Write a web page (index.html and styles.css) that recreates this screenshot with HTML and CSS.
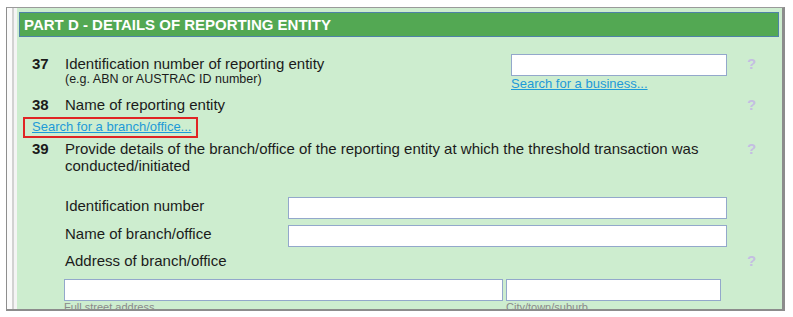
FILE: index.html
```html
<!DOCTYPE html>
<html>
<head>
<meta charset="utf-8">
<link rel="stylesheet" href="styles.css">
</head>
<body>
<div class="frame">
  <div class="strip"></div>
  <div class="panel">
    <div class="header">PART D - DETAILS OF REPORTING ENTITY</div>

    <div class="row r37">
      <div class="num">37</div>
      <div class="label">Identification number of reporting entity<div class="sub">(e.g. ABN or AUSTRAC ID number)</div></div>
      <div class="field">
        <div class="input"></div>
        <a class="link" href="#">Search for a business...</a>
      </div>
      <div class="help">?</div>
    </div>

    <div class="row r38">
      <div class="num">38</div>
      <div class="label">Name of reporting entity</div>
      <div class="help">?</div>
    </div>

    <div class="branch"><a class="link" href="#">Search for a branch/office...</a></div>

    <div class="row r39">
      <div class="num">39</div>
      <div class="label">Provide details of the branch/office of the reporting entity at which the threshold transaction was conducted/initiated</div>
      <div class="help">?</div>
    </div>

    <div class="subrow s-id">
      <div class="slabel">Identification number</div>
      <div class="input wide"></div>
      <div class="help"></div>
    </div>
    <div class="subrow s-name">
      <div class="slabel">Name of branch/office</div>
      <div class="input wide"></div>
      <div class="help"></div>
    </div>
    <div class="subrow s-addr">
      <div class="slabel grow">Address of branch/office</div>
      <div class="help">?</div>
    </div>
    <div class="addr">
      <div class="acol street">
        <div class="input"></div>
        <div class="hint">Full street address</div>
      </div>
      <div class="acol city">
        <div class="input"></div>
        <div class="hint">City/town/suburb</div>
      </div>
    </div>
  </div>
</div>
</body>
</html>
```
FILE: styles.css
```css
html, body {
  margin: 0;
  padding: 0;
  background: #ffffff;
}
body {
  font-family: "Liberation Sans", Arial, sans-serif;
  color: #1b1b1b;
}
.frame {
  margin: 7px 0 0 6px;
  width: 775px;
  height: 301px;
  border-top: 1px solid #9a9a9a;
  border-left: 1px solid #8e8e8e;
  border-right: 3px solid #8c8c8c;
  border-bottom: 2px solid #8c8c8c;
  display: flex;
  overflow: hidden;
}
.strip {
  width: 10px;
  flex: none;
  background: linear-gradient(to right, #fbfbfb 0, #fbfbfb 5px, #d2d2d2 5px, #d2d2d2 7px, #f4f4f4 7px);
}
.panel {
  flex: 1;
  background: #cdedcf;
  padding-left: 15px;
  overflow: hidden;
}
.header {
  margin: 4px 3px 0 -13px;
  height: 17px;
  padding: 3px 4px;
  border: 1px solid #4f82a8;
  background: #53a853;
  color: #ffffff;
  font-weight: bold;
  font-size: 15px;
  line-height: 17px;
}
.row {
  display: flex;
  align-items: flex-start;
  font-size: 15px;
  line-height: 17px;
}
.num {
  width: 33px;
  flex: none;
  font-weight: bold;
}
.label {
  flex: 1;
}
.sub {
  font-size: 12.5px;
  line-height: 14px;
}
.field {
  width: 216px;
  flex: none;
  display: flex;
  flex-direction: column;
}
.help {
  width: 55px;
  flex: none;
  padding-left: 20px;
  box-sizing: border-box;
  color: #c4bee2;
  font-weight: bold;
  font-size: 15px;
  line-height: 17px;
}
.input {
  height: 20px;
  background: #ffffff;
  border: 1px solid #93a8cb;
}
.link {
  color: #1d9ad8;
  font-size: 13px;
  line-height: 15px;
  text-decoration: underline;
}
.r37 {
  margin-top: 17px;
}
.r37 .num, .r37 .label, .r37 .help {
  padding-top: 1px;
}
.r38 {
  margin-top: 5px;
}
.branch {
  margin: 4px 0 0 -9px;
  display: inline-block;
  border: 2px solid #e02424;
  padding: 0 5px 2px 7px;
  line-height: 15px;
}
.branch .link {
  display: block;
}
.r39 {
  margin-top: 2px;
}
.subrow {
  display: flex;
  align-items: flex-start;
  padding-left: 33px;
  font-size: 15px;
  line-height: 17px;
}
.slabel {
  width: 223px;
  flex: none;
}
.slabel.grow {
  flex: 1;
  width: auto;
}
.input.wide {
  width: 437px;
  flex: none;
}
.s-id {
  margin-top: 23px;
}
.s-name {
  margin-top: 6px;
}
.s-addr {
  margin-top: 5px;
}
.addr {
  display: flex;
  gap: 3px;
  margin: 10px 0 0 32px;
}
.street {
  width: 439px;
}
.city {
  width: 215px;
}
.hint {
  font-size: 11px;
  line-height: 13px;
  color: #8a8a8a;
}
```
